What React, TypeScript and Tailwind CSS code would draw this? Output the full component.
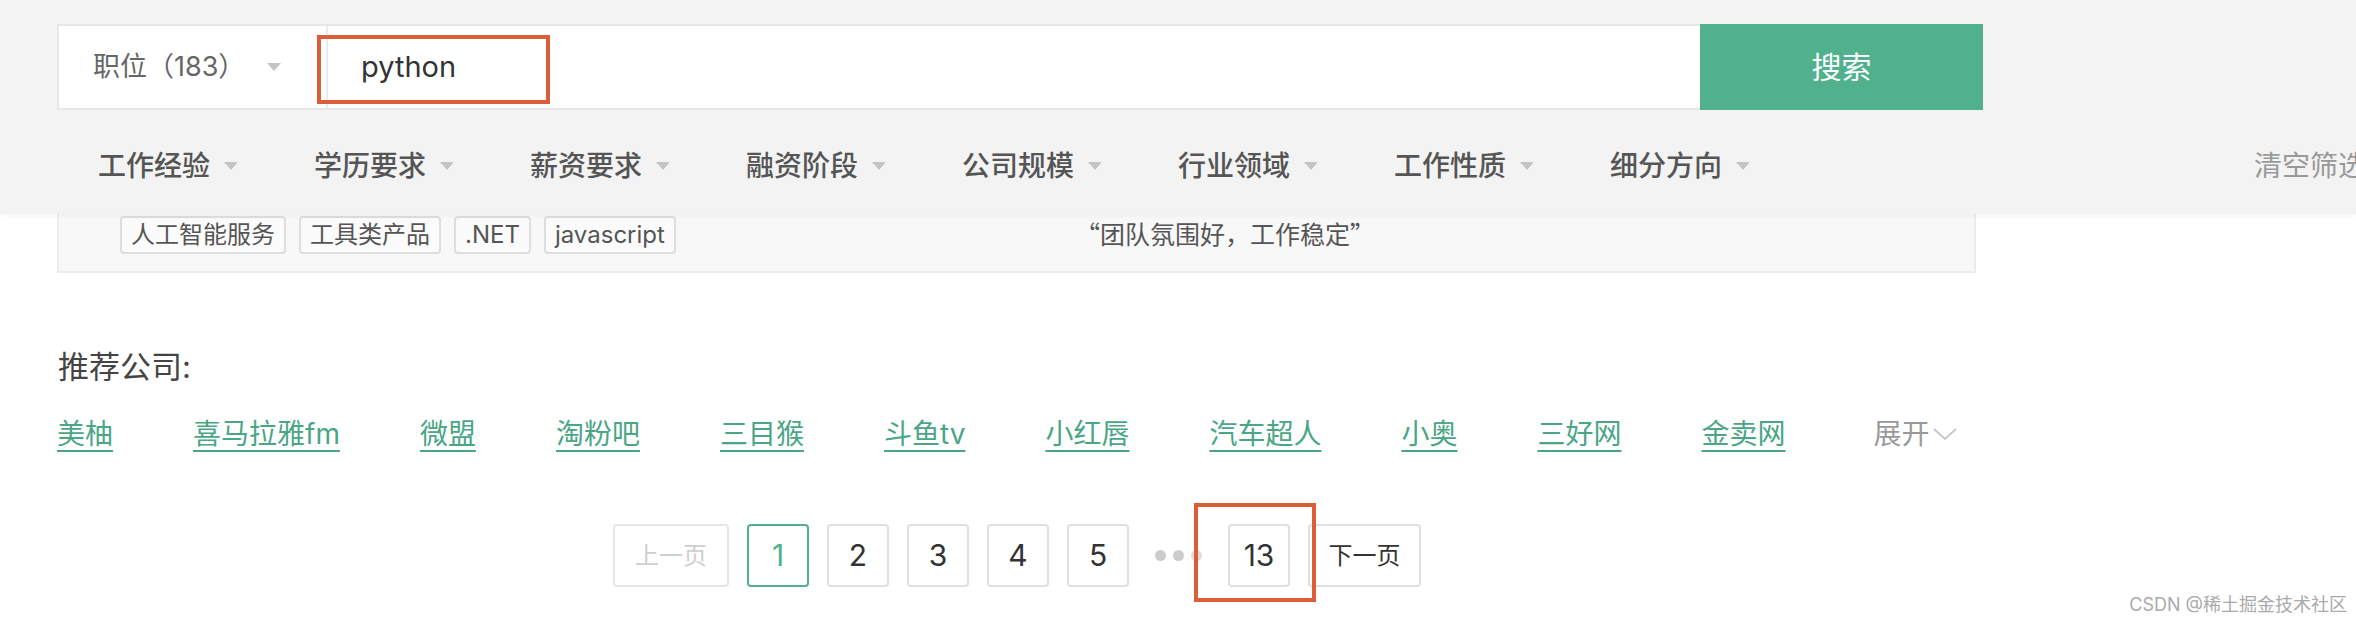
const filters = ["工作经验", "学历要求", "薪资要求", "融资阶段", "公司规模", "行业领域", "工作性质", "细分方向"];
const tags = ["人工智能服务", "工具类产品", ".NET", "javascript"];
const companies = ["美柚", "喜马拉雅fm", "微盟", "淘粉吧", "三目猴", "斗鱼tv", "小红唇", "汽车超人", "小奥", "三好网", "金卖网"];
const pages = ["2", "3", "4", "5"];

const Caret = ({ className }: { className?: string }) => (
  <svg width="14" height="8" viewBox="0 0 14 8" className={className}>
    <path d="M0 0h14L7 8z" fill="currentColor" />
  </svg>
);

const App: React.FC = () => {
  return (
    <div className="relative h-[624px] w-[2356px] overflow-hidden bg-white font-['Inter','Noto_Sans_CJK_SC',sans-serif]">
      {/* header with search + filters */}
      <div className="relative z-10 h-[214px] bg-[#f3f3f3] pl-[57px] pt-[24px] shadow-[0_2px_6px_rgba(0,0,0,0.04)]">
        <div className="relative flex h-[86px] w-[1926px]">
          <div className="flex flex-1 items-center border-2 border-r-0 border-[#e6e6e6] bg-white">
            <div className="flex h-full w-[269px] items-center border-r-2 border-[#ececec] pl-[34px]">
              <span className="text-[27px] text-[#666]">职位（183）</span>
              <Caret className="ml-[22px] text-[#c4c4c4]" />
            </div>
            <span className="pl-[33px] text-[29px] text-[#333]">python</span>
          </div>
          <button className="w-[283px] bg-[#50b18c] text-[30px] text-white">搜索</button>
          <div className="absolute left-[260px] top-[11px] h-[69px] w-[233px] border-4 border-[#da5f38]" />
        </div>
        <div className="flex h-[104px] items-center pl-[41px] pt-[8px]">
          {filters.map((f) => (
            <div key={f} className="flex w-[216px] shrink-0 items-center">
              <span className="text-[28px] font-medium text-[#555]">{f}</span>
              <Caret className="ml-[14px] text-[#c4c4c4]" />
            </div>
          ))}
          <span className="ml-[428px] shrink-0 whitespace-nowrap text-[28px] text-[#999]">清空筛选</span>
        </div>
      </div>

      {/* job card tail */}
      <div className="ml-[57px] flex h-[59px] w-[1919px] items-start border-2 border-t-0 border-[#ededed] bg-[#f8f8f8] pt-[2px]">
        <div className="flex w-[1016px] gap-[13px] pl-[61px]">
          {tags.map((t) => (
            <span
              key={t}
              className="flex h-[38px] items-center rounded-[4px] border-2 border-[#dedede] bg-[#fbfbfb] px-[9px] text-[24px] text-[#555]"
            >
              {t}
            </span>
          ))}
        </div>
        <div className="flex h-[36px] items-center font-['Noto_Sans_CJK_SC',sans-serif] text-[25px] text-[#555]">
          “团队氛围好，工作稳定”
        </div>
      </div>

      {/* recommended companies */}
      <div className="mt-[74px] pl-[58px] text-[31px] leading-[40px] text-[#444]">推荐公司:</div>
      <div className="mt-[27px] flex items-center gap-[80px] pl-[57px] text-[28px] leading-[40px]">
        {companies.map((c) => (
          <a key={c} className="text-[#4aa685] underline decoration-2 underline-offset-[6px]">
            {c}
          </a>
        ))}
        <span className="ml-[8px] flex items-center text-[#999]">
          展开
          <svg width="26" height="14" viewBox="0 0 26 14" className="ml-[2px]">
            <polyline points="2,2 13,12 24,2" fill="none" stroke="#c8c8c8" strokeWidth="2" />
          </svg>
        </span>
      </div>

      {/* pagination */}
      <div className="mt-[70px] flex items-center gap-[18px] pl-[613px]">
        <span className="flex h-[63px] w-[116px] items-center justify-center rounded-[4px] border-2 border-[#e6e6e6] text-[24px] text-[#cfcfcf]">
          上一页
        </span>
        <span className="flex h-[63px] w-[62px] items-center justify-center rounded-[4px] border-2 border-[#50b18c] text-[30px] text-[#50b18c]">
          1
        </span>
        {pages.map((p) => (
          <span
            key={p}
            className="flex h-[63px] w-[62px] items-center justify-center rounded-[4px] border-2 border-[#e0e0e0] text-[30px] text-[#333]"
          >
            {p}
          </span>
        ))}
        <span className="mx-[8px] flex items-center gap-[7px]">
          <i className="h-[11px] w-[11px] rounded-full bg-[#cccccc]" />
          <i className="h-[11px] w-[11px] rounded-full bg-[#cccccc]" />
          <i className="h-[11px] w-[11px] rounded-full bg-[#dddddd]" />
        </span>
        <span className="relative flex h-[63px] w-[62px] items-center justify-center rounded-[4px] border-2 border-[#e0e0e0] text-[30px] text-[#333]">
          13
          <span className="absolute bottom-[-17px] left-[-36px] right-[-28px] top-[-23px] z-10 border-4 border-[#da5f38]" />
        </span>
        <span className="flex h-[63px] w-[113px] items-center justify-center rounded-[4px] border-2 border-[#e0e0e0] text-[24px] text-[#333]">
          下一页
        </span>
      </div>

      <div className="absolute right-[9px] top-[591px] text-[18px] text-[#aaa]">CSDN @稀土掘金技术社区</div>
    </div>
  );
};

export default App;
